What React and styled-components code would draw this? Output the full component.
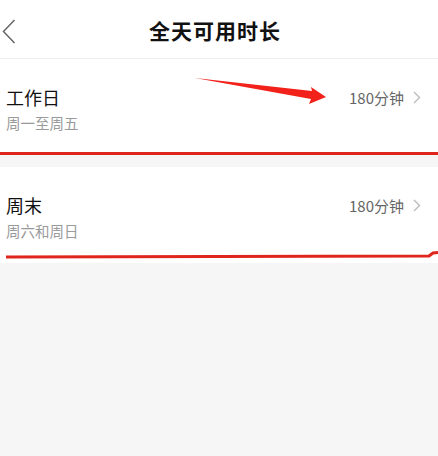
import React from 'react'
import styled, { createGlobalStyle } from 'styled-components'

const Global = createGlobalStyle`
  html, body {
    margin: 0;
    padding: 0;
    background: #f6f6f6;
    font-family: "Noto Sans CJK SC", "Noto Sans", sans-serif;
  }
`

const Page = styled.div`
  position: relative;
  width: 438px;
  height: 456px;
  background: #f6f6f6;
  overflow: hidden;
`

const Header = styled.div`
  position: relative;
  height: 58px;
  display: flex;
  align-items: center;
  justify-content: center;
  padding-right: 8px;
  background: #fff;
  border-bottom: 1px solid #ececec;
`

const Back = styled.svg`
  position: absolute;
  left: 2px;
  top: 19px;
`

const Title = styled.h1`
  margin: 0;
  font-size: 21px;
  font-weight: 700;
  color: #111;
  letter-spacing: 1px;
  line-height: 28px;
  padding-top: 2px;
`

const List = styled.div`
  display: flex;
  flex-direction: column;
  gap: 12px;
`

const Row = styled.div`
  height: 96px;
  box-sizing: border-box;
  padding: 27px 17px 0 6px;
  background: #fff;
  display: flex;
  justify-content: space-between;
  align-items: flex-start;
`

const Texts = styled.div`
  display: flex;
  flex-direction: column;
  gap: 6px;
`

const Name = styled.div`
  font-size: 18px;
  line-height: 22px;
  color: #111;
`

const Sub = styled.div`
  font-size: 14.5px;
  line-height: 18px;
  color: #9a9a9a;
`

const Value = styled.div`
  display: flex;
  align-items: center;
  gap: 9px;
  height: 22px;
  font-size: 15px;
  color: #666;
`

const Marks = styled.svg`
  position: absolute;
  left: 0;
  top: 0;
  pointer-events: none;
`

const Chevron = () => (
  <svg width="8" height="13" viewBox="0 0 8 13">
    <path d="M1 1l5.5 5.5L1 12" fill="none" stroke="#bbb" strokeWidth="1.4" />
  </svg>
)

const rows = [
  { name: '工作日', sub: '周一至周五', value: '180分钟' },
  { name: '周末', sub: '周六和周日', value: '180分钟' },
]

export default function App() {
  return (
    <Page>
      <Global />
      <Header>
        <Back width="14" height="25" viewBox="0 0 14 25">
          <path d="M12.5 1L1.5 12.5L12.5 24" fill="none" stroke="#666" strokeWidth="1.5" />
        </Back>
        <Title>全天可用时长</Title>
      </Header>
      <List>
        {rows.map((r) => (
          <Row key={r.name}>
            <Texts>
              <Name>{r.name}</Name>
              <Sub>{r.sub}</Sub>
            </Texts>
            <Value>
              {r.value}
              <Chevron />
            </Value>
          </Row>
        ))}
      </List>
      <Marks width="438" height="456" viewBox="0 0 438 456">
        <path d="M195 78 L312 91 L311 87 L326 97 L309 104 L311 99 Z" fill="#f2211a" />
        <rect x="0" y="152" width="438" height="3" fill="#e0261c" />
        <path d="M6 257 L429 256 L433 253 L438 252.5" fill="none" stroke="#e0261c" strokeWidth="3" />
      </Marks>
    </Page>
  )
}
